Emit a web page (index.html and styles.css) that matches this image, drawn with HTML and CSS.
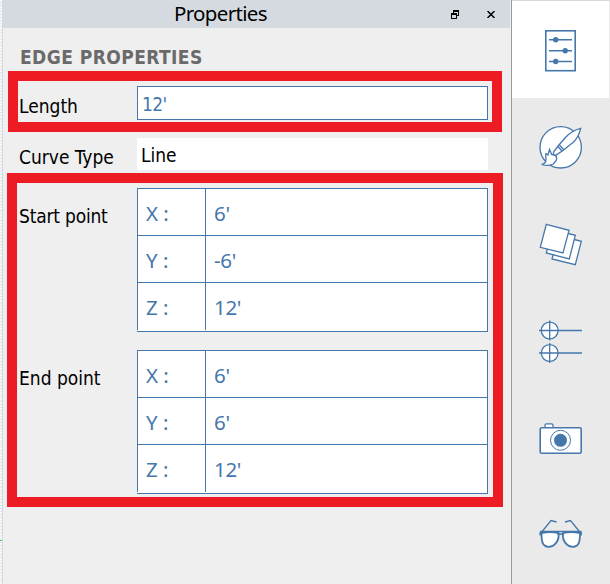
FILE: index.html
```
<!DOCTYPE html>
<html lang="en">
<head>
<meta charset="utf-8">
<title>Properties</title>
<link rel="stylesheet" href="styles.css">
</head>
<body>
<div class="app">
  <div class="canvas-edge"><span class="axis"></span></div>
  <main class="panel">
    <header class="titlebar">
      <h1>Properties</h1>
      <svg class="restore" width="9" height="10" shape-rendering="crispEdges"><path fill="#000" fill-rule="evenodd" d="M2 0h6v6H6v3H0V3h2zM3 2v1h3v2h1V2zM1 5v3h4V5z"/></svg>
      <svg class="close" width="8" height="7"><path d="M.5 0l7 7M7.5 0l-7 7" stroke="#000" stroke-width="1.5"/></svg>
    </header>
    <h2>EDGE PROPERTIES</h2>
    <section class="marked length">
      <label><span class="t-length">Length</span></label>
      <div class="field"><span>12'</span></div>
    </section>
    <section class="curve">
      <label><span class="t-curve">Curve Type</span></label>
      <div class="select"><span>Line</span></div>
    </section>
    <section class="marked points">
      <div class="point">
        <label><span class="t-start">Start point</span></label>
        <div class="coords">
          <div class="row"><b>X :</b><span>6'</span></div>
          <div class="row"><b>Y :</b><span>-6'</span></div>
          <div class="row last"><b>Z :</b><span>12'</span></div>
        </div>
      </div>
      <div class="point">
        <label><span class="t-end">End point</span></label>
        <div class="coords">
          <div class="row"><b>X :</b><span>6'</span></div>
          <div class="row"><b>Y :</b><span>6'</span></div>
          <div class="row last"><b>Z :</b><span>12'</span></div>
        </div>
      </div>
    </section>
  </main>
  <nav class="tools">
    <div class="tool active"><svg viewBox="0 0.500 98 97">
      <rect x="33.8" y="30.3" width="29.4" height="39.9" stroke-width="1.6"/>
      <path d="M37 39.300h23M37 50.200h23M37 61h23" stroke-width="1.4"/>
      <g class="solid"><circle cx="43.7" cy="39.300" r="2.7"/><circle cx="53.2" cy="50.200" r="2.7"/><circle cx="43.7" cy="61" r="2.7"/></g>
    </svg></div>
    <div class="tool"><svg viewBox="0 0 98 97">
      <circle cx="48.7" cy="50.300" r="20.7"/>
      <path d="M29.700 67.500c2.500-.5 4.300-2 4.300-5 0-2.300-.7-4 0-6l2 1.500 1.500-5.500 2.200 5c3 0 5 1.500 5 4 0 2-1.500 3.500-3.400 5.500-3.500 1.800-7.500 1.800-11.600.5z"/>
      <path d="M68.700 31.300c-7 1.700-11.500 5-15 9L46.500 48.500 42 54.500c-1.500 2-.3 3.800 2 3.500l7-4.500 10.500-8.500c4-4 6-8.500 7.200-13.700z"/>
      <path d="M47.500 48l4.500 5M46 49.500l4 4.500"/>
    </svg></div>
    <div class="tool"><svg viewBox="0 0 98 97">
      <path d="M46.300 41.500l23 5.800-6 23.400-23.300-5.700z"/>
      <path d="M40.300 35.500l23 5.800-6 23.700-23-6z"/>
      <path d="M34.300 30.300l22.700 6-6 22.700-22.700-5.700z"/>
    </svg></div>
    <div class="tool"><svg viewBox="0 2 98 97">
      <circle cx="37.700" cy="41.500" r="8.400"/><circle cx="37.700" cy="64" r="8.400"/>
      <path d="M27 41.500h43M37.700 31.500v20M27 64h43M37.700 54v20"/>
    </svg></div>
    <div class="tool"><svg viewBox="0 -2.800 98 97">
      <path d="M33 37.500v-3q0-1.500 1.500-1.500h5q1.500 0 1.500 1.500v3"/>
      <rect x="28.200" y="37" width="41" height="25.500" rx="1.500" stroke-width="1.600"/>
      <circle cx="48.500" cy="49.500" r="10" stroke-width="1"/><circle class="solid" cx="48.500" cy="49.500" r="6.500"/>
    </svg></div>
    <div class="tool"><svg viewBox="0 0 98 97">
      <path d="M28.500 48.500l10.500-13 5.500 1.500M69 48.500L58.500 35.500 53 37" class="line"/>
      <path d="M29.500 48c5-1 12.500-1 17 0 1 8-4 13.800-10 13.800-6 0-7-5-7-13.800zM68 48c-5-1-12.500-1-17 0-1 8 4 13.800 10 13.800 6 0 7-5 7-13.800z" stroke-width="1.800"/>
      <path d="M28 46.500h41.500M45.500 49.500q3.200-1 6.500 0M28.200 47v3.500M69.200 47v3.500" stroke-width="1.500" class="line"/>
    </svg></div>
  </nav>
</div>
</body>
</html>
```

FILE: styles.css
```
* { box-sizing: border-box; }
body { margin: 0; background: #efefef; overflow: hidden; }
.app { display: flex; height: 584px; width: 610px; }
.canvas-edge {
  width: 3px; border-right: 1px solid #d3d9e0; padding-top: 540px;
  background: repeating-linear-gradient(168deg, #f8f8f8 0 2px, #e4e4e4 2px 3px);
}
.axis { display: block; height: 1px; background: #4cc04c; }
.panel { width: 508px; background: #efefef; font-family: "DejaVu Sans Condensed", "DejaVu Sans", sans-serif; font-stretch: condensed; font-size: 19px; color: #000; }
h1, h2 { margin: 0; }
.titlebar { display: flex; width: 507px; height: 28px; background: #d5dae1; }
h1 { margin-left: 171px; width: 277px; font: 400 20.500px/26px "Noto Sans", sans-serif; letter-spacing: -.68px; }
.restore { margin-top: 10px; }
.close { margin: 11px 0 0 27px; }
h2 { height: 43px; padding-left: 17px; font-size: 19px; line-height: 58px; font-weight: 700; letter-spacing: .43px; color: #6a6a6a; white-space: nowrap; }
.marked { border: 10px solid #ed1c24; }
label { white-space: nowrap; }
label span, .field span, .select span { display: inline-block; }
.length { display: flex; margin-left: 5px; width: 494px; height: 61px; }
.length label { width: 119px; padding-left: 1px; line-height: 50px; }
.field { width: 351px; height: 34px; margin-top: 5px; padding-left: 4px; border: 1px solid #4677ab; background: #fff; color: #4677ab; line-height: 34px; }
.field span { letter-spacing: -.6px; }
.curve { display: flex; height: 41px; padding: 6px 0 0 15px; }
.curve label { width: 119px; padding-left: 1px; line-height: 38px; }
.select { width: 351px; height: 32px; padding-left: 4px; background: #fff; line-height: 34px; }
.points { margin-left: 4px; width: 496px; height: 334px; padding-top: 5px; display: grid; grid-template-rows: 144px 144px; row-gap: 18px; }
.point { display: flex; }
.point label { width: 120px; padding: 18px 0 0 2px; line-height: 20px; }
.t-start { letter-spacing: -.2px; }
.coords { width: 351px; border: 1px solid #4677ab; border-left: 0; background: #fff; color: #4677ab; font: 20.500px/48px "Noto Sans", sans-serif; }
.row { height: 47px; display: flex; border-left: 1px solid #4677ab; border-bottom: 1px solid #4677ab; }
.row.last { border-bottom: 0; }
.row b { width: 68px; padding-left: 8px; font-weight: 400; border-right: 1px solid #4677ab; }
.row span { padding-left: 8px; letter-spacing: -.3px; }
.tools { width: 99px; border-left: 1px solid #9b9b9b; background: #eaeaea; }
.tool { height: 97px; }
.tool.active { background: #fff; border-top: 1px solid #d5dae1; height: 98px; margin-bottom: -1px; border-right: 1px solid #eaeaea; }
.tool svg { display: block; width: 98px; height: 97px; fill: #fff; stroke: #4677ab; stroke-width: 1.300; }
.tool .solid { fill: #4677ab; stroke: none; }
.tool .line { fill: none; }
```
